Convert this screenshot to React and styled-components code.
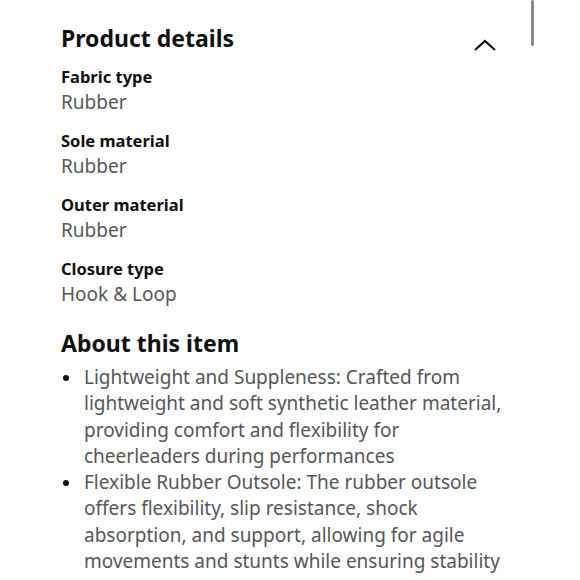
import styled, { createGlobalStyle } from 'styled-components';

const GlobalStyle = createGlobalStyle`
  html, body {
    margin: 0;
    padding: 0;
    background: #fff;
  }
  body {
    font-family: 'Noto Sans', 'Open Sans', sans-serif;
    color: #0f1111;
  }
`;

const Page = styled.div`
  position: relative;
  width: 580px;
  height: 580px;
  overflow: hidden;
`;

const Scrollbar = styled.div`
  position: absolute;
  top: 0;
  left: 531px;
  width: 3px;
  height: 46px;
  border-radius: 2px;
  background: #8a8a8a;
`;

const Content = styled.div`
  padding: 23px 0 0 61px;
  width: 436px;
`;

const Header = styled.div`
  display: flex;
  align-items: center;
  justify-content: space-between;
`;

const Title = styled.h2`
  margin: 0;
  font-size: 23px;
  font-weight: 700;
  line-height: 30px;
  color: #0f1111;
`;

const Chevron = styled.svg`
  width: 24px;
  height: 14px;
  margin-top: 14px;
`;

const Specs = styled.dl`
  margin: 12px 0 0;
  display: flex;
  flex-direction: column;
  gap: 13px;
`;

const Spec = styled.div`
  display: flex;
  flex-direction: column;
`;

const Label = styled.dt`
  font-size: 16.5px;
  font-weight: 700;
  line-height: 24px;
  color: #0f1111;
`;

const Value = styled.dd`
  margin: 0;
  font-size: 19px;
  line-height: 27px;
  color: #565959;
`;

const SubTitle = styled(Title)`
  margin-top: 20px;
`;

const Bullets = styled.ul`
  margin: 6px 0 0;
  padding: 0;
  list-style: none;
`;

const Bullet = styled.li`
  position: relative;
  padding-left: 23px;
  font-size: 19px;
  line-height: 26.3px;
  color: #545757;
  white-space: nowrap;

  &::before {
    content: '';
    position: absolute;
    left: 2px;
    top: 11px;
    width: 6px;
    height: 6px;
    border-radius: 50%;
    background: #0f1111;
  }
`;

const specs = [
  ['Fabric type', 'Rubber'],
  ['Sole material', 'Rubber'],
  ['Outer material', 'Rubber'],
  ['Closure type', 'Hook & Loop'],
];

const bullets = [
  [
    'Lightweight and Suppleness: Crafted from',
    'lightweight and soft synthetic leather material,',
    'providing comfort and flexibility for',
    'cheerleaders during performances',
  ],
  [
    'Flexible Rubber Outsole: The rubber outsole',
    'offers flexibility, slip resistance, shock',
    'absorption, and support, allowing for agile',
    'movements and stunts while ensuring stability',
  ],
];

export default function App() {
  return (
    <Page>
      <GlobalStyle />
      <Scrollbar />
      <Content>
        <Header>
          <Title>Product details</Title>
          <Chevron viewBox="0 0 24 14">
            <path d="M2 12 L12 3 L22 12" fill="none" stroke="#0f1111" strokeWidth="2.2" />
          </Chevron>
        </Header>
        <Specs>
          {specs.map(([label, value]) => (
            <Spec key={label}>
              <Label>{label}</Label>
              <Value>{value}</Value>
            </Spec>
          ))}
        </Specs>
        <SubTitle>About this item</SubTitle>
        <Bullets>
          {bullets.map((lines, i) => (
            <Bullet key={i}>
              {lines.map((line, j) => (
                <span key={j}>
                  {line}
                  {j < lines.length - 1 && <br />}
                </span>
              ))}
            </Bullet>
          ))}
        </Bullets>
      </Content>
    </Page>
  );
}
